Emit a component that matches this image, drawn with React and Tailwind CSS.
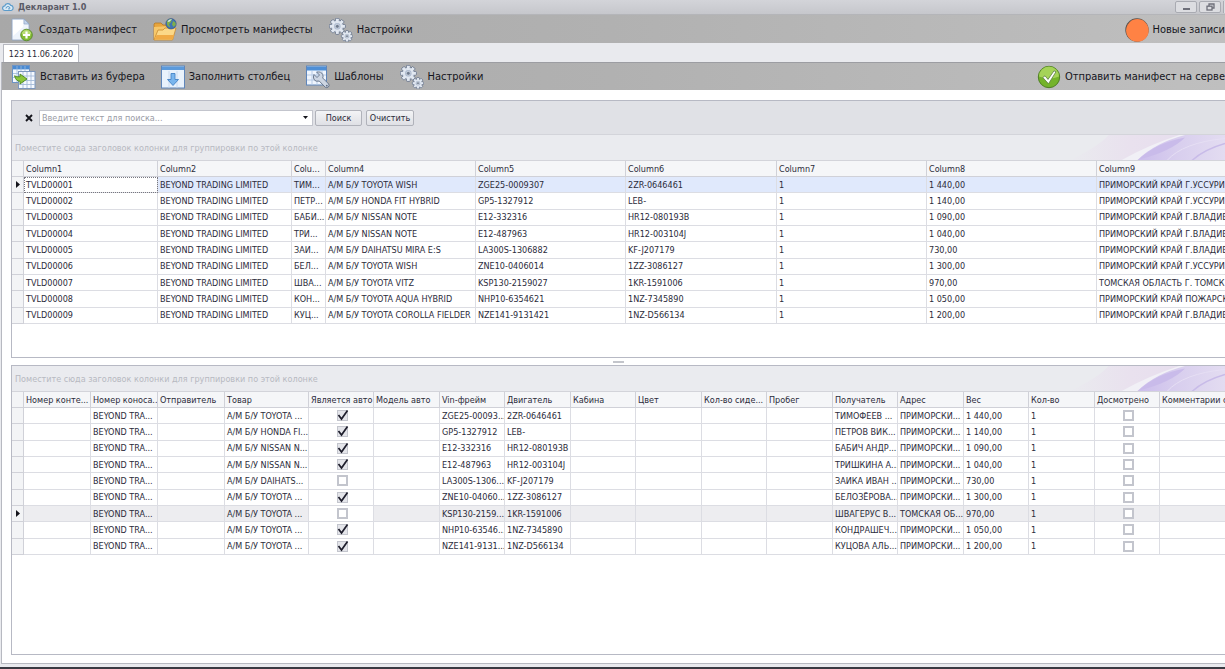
import React from "react";

const GEAR_TEETH = [0, 45, 90, 135, 180, 225, 270, 315];

function Gear({ cx, cy, r }) {
  return (
    <g transform={`translate(${cx} ${cy})`}>
      {GEAR_TEETH.map((a) => (
        <rect key={a} x={-r * 0.23} y={-r} width={r * 0.46} height={r * 0.6} rx={r * 0.1} fill="#dde4ee" stroke="#66738a" strokeWidth="0.9" transform={`rotate(${a})`} />
      ))}
      <circle r={r * 0.76} fill="#d5dde9" stroke="#748197" strokeWidth="0.7" />
      {GEAR_TEETH.map((a) => (
        <rect key={a} x={-r * 0.17} y={-r * 0.92} width={r * 0.34} height={r * 0.5} fill="#e2e8f1" transform={`rotate(${a})`} />
      ))}
      <circle r={r * 0.4} fill="#aebbd0" />
      <circle r={r * 0.24} fill="#6e7a8e" stroke="#f1f4f9" strokeWidth="0.5" />
    </g>
  );
}

function GearsIcon() {
  return (
    <svg className="size-6 shrink-0" viewBox="0 0 24 24" aria-hidden="true">
      <Gear cx={8.3} cy={8.3} r={8} />
      <Gear cx={18} cy={18.2} r={5.6} />
    </svg>
  );
}

function NewDocIcon() {
  return (
    <svg className="size-6 shrink-0" viewBox="0 0 24 24" aria-hidden="true">
      <path d="M1 1h12l5 5v16H1z" fill="#eef4fc" stroke="#8fa5c4" strokeWidth="0.8" />
      <path d="M2 2h10v7l-10 9z" fill="#fff" />
      <path d="M13 1v5h5z" fill="#c4d6ee" stroke="#8fa5c4" strokeWidth="0.7" />
      <circle cx="15.5" cy="17" r="5.8" fill="#84bd34" stroke="#4f8220" strokeWidth="0.8" />
      <path d="M10.6 16a5 5 0 0 1 9.8 0q-5 2-9.8 0z" fill="#b6dc72" />
      <path d="M15.5 13.4v7.2M11.9 17h7.2" stroke="#fff" strokeWidth="2.2" />
    </svg>
  );
}

function FolderIcon() {
  return (
    <svg className="size-6 shrink-0" viewBox="0 0 24 24" aria-hidden="true">
      <path d="M1 22V6l1-1h6l2 2h9v3" fill="#e8a53c" stroke="#b57a26" strokeWidth="0.8" />
      <path d="M1 22V9l16-1v6z" fill="#f6c76a" />
      <path d="M1 22 5 12h5l2-2h11l-3.5 12z" fill="#fbd888" stroke="#c98a2e" strokeWidth="0.8" />
      <path d="M1.6 21.6 3.6 17h17.6l-1.5 4.6z" fill="#f0ab46" />
      <circle cx="18" cy="5.8" r="5.2" fill="#3f73b5" stroke="#35507c" strokeWidth="0.6" />
      <path d="M14 3q3-2.6 5-1.8l-1 3-2 2 1.4 3Q13 8.5 14 3zM20 3l2.4 1.5.4 2.5-2.3 2L19 6.5z" fill="#7fae4c" />
      <path d="M14.5 3.2q2-2.3 4.5-1.9l-3 2.6z" fill="#d4e6f3" />
    </svg>
  );
}

function PasteIcon() {
  return (
    <svg className="size-6 shrink-0" viewBox="0 0 24 24" aria-hidden="true">
      <rect x=".5" y=".5" width="17" height="17" fill="#f3f8fe" stroke="#6d93c4" />
      <rect x="1" y="1" width="16" height="3.4" fill="#4a8bd2" />
      <path d="M1 8.5h16M1 12.5h16M5 1v16M9 1v16M13 1v16" stroke="#9db9dc" strokeWidth=".8" />
      <rect x="6.5" y="6.5" width="16.5" height="17" fill="#f6faff" stroke="#7d97bd" />
      <path d="M7 11h16M7 15.5h16M7 19.5h16M11 7v16M15 7v16M19 7v16" stroke="#a4bad8" strokeWidth=".9" />
      <path d="M2.5 10.8q2 1.400 5.500 1V9l7 5-7 5v-2.800Q4 16.500 2.500 10.800z" fill="#8cc63a" stroke="#4c8720" strokeWidth=".9" />
    </svg>
  );
}

function FillColumnIcon() {
  return (
    <svg className="size-6 shrink-0" viewBox="0 0 24 24" aria-hidden="true">
      <rect x=".5" y="1" width="23" height="22" fill="#e9f2fc" stroke="#5f86bb" />
      <rect x="1" y="1.5" width="22" height="3.500" fill="#5c9adb" />
      <path d="M8 6v17M16 6v17" stroke="#c3d6ee" strokeWidth=".8" />
      <path d="M10 8.5h4v6h3.500L12 20.500l-5.500-6H10z" fill="#7ab6ee" stroke="#4583c6" strokeWidth=".9" />
    </svg>
  );
}

function TemplatesIcon() {
  return (
    <svg className="size-6 shrink-0" viewBox="0 0 24 24" aria-hidden="true">
      <rect x=".5" y="1" width="20" height="19" fill="#eff5fd" stroke="#5f86bb" />
      <rect x="1" y="1.500" width="19" height="4" fill="#4f8fd6" />
      <path d="M1 10h19M1 15h19M6 6v14M11 6v14M16 6v14" stroke="#b1c7e3" strokeWidth=".9" />
      <path d="M8 9.500 11 12.500 13.500 10 10.700 7.200Q15 6 16.700 9.500q.8 1.700 0 3.500l6 6q1 1.800-.4 3t-3 .3l-6-6.200Q9.500 17 8 14.500 6.800 12 8 9.500z" fill="#cdd6e3" stroke="#5f6d83" strokeWidth=".9" />
      <circle cx="20.800" cy="20.700" r=".9" fill="#5f6d83" />
    </svg>
  );
}

function SendIcon() {
  return (
    <svg className="size-6 shrink-0" viewBox="0 0 24 24" aria-hidden="true">
      <circle cx="12" cy="12" r="10.700" fill="#74b32a" stroke="#4f7f24" strokeWidth="1" />
      <path d="M2 11.500a10 10 0 0 1 20 0q-9 4-20 0z" fill="#a5d358" />
      <path d="M5.800 12.500 8 10.800l3 3.600L17 5.800l2 1-7.500 12z" fill="#fff" stroke="#5d7f43" strokeWidth=".8" />
    </svg>
  );
}

function Swirl() {
  return (
    <svg className="h-full w-44 shrink-0" viewBox="0 0 176 26" preserveAspectRatio="xMaxYMid slice" aria-hidden="true">
      <defs>
        <linearGradient id="pinkFade" x1="0" x2="1">
          <stop offset="0" stopColor="#eaebef" />
          <stop offset=".4" stopColor="#e9e1ee" />
          <stop offset="1" stopColor="#e5dcee" />
        </linearGradient>
        <linearGradient id="violetFade" x1="0" x2="1">
          <stop offset="0" stopColor="#cbbdec" />
          <stop offset=".45" stopColor="#d8ceee" />
          <stop offset="1" stopColor="#e3dcf1" />
        </linearGradient>
      </defs>
      <path d="M20 26Q50 12 60 0h116v26z" fill="url(#pinkFade)" />
      <path d="M72 26Q100 10 132 0h18Q110 8 88 26z" fill="#f1f0f6" />
      <path d="M88 26Q106 8 138 0h38v26z" fill="url(#violetFade)" />
      <path d="M90 25q18-17 46-22-14 14-46 22z" fill="#c9bbea" />
      <path d="M143 26q12-11 33-17" fill="none" stroke="#c8bbe8" strokeWidth="1.500" />
      <path d="M118 26q16-18 58-22" fill="none" stroke="#e6dff4" strokeWidth="1" />
    </svg>
  );
}

function ToolButton({ icon, children }) {
  return (
    <button type="button" className="flex shrink-0 items-center gap-1 whitespace-nowrap text-[11px] leading-4 text-[#15151c]">
      {icon}
      {children}
    </button>
  );
}

function GroupPanel() {
  return (
    <div className="flex h-[26px] items-center justify-between border-b border-[#d3d4da] bg-[#eaebef] pl-[3px] text-[#b7b9c1]">
      <span className="pt-px whitespace-nowrap">Поместите сюда заголовок колонки для группировки по этой колонке</span>
      <Swirl />
    </div>
  );
}

const CELL = "overflow-hidden whitespace-nowrap border-r border-b border-[#dcdde3] py-0 pr-0 pl-[2px] last:border-r-0";
const HEAD = "overflow-hidden whitespace-nowrap border-r border-b border-[#d0d1d8] bg-[#f5f6f8] py-0 pr-0 pl-[2px] text-left font-normal last:border-r-0";
const INDICATOR = "border-r border-b border-[#d0d1d8] bg-[#f3f4f6] p-0";

function RowMarker() {
  return (
    <svg className="mx-auto h-[7px] w-1" viewBox="0 0 4 7" aria-label="Текущая строка">
      <path d="M0 0 4 3.500 0 7z" fill="#15151c" />
    </svg>
  );
}

function CheckBox({ checked, label }) {
  return (
    <label className="relative mx-auto block size-[11px]">
      <input
        type="checkbox"
        defaultChecked={checked}
        aria-label={label}
        className="block size-[11px] appearance-none border-2 border-[#c3c5cd] bg-white peer checked:border checked:bg-[#e4e5ea]"
      />
      <svg className="pointer-events-none absolute inset-0 hidden size-[11px] overflow-visible peer-checked:block" viewBox="0 0 11 11" aria-hidden="true">
        <path d="M1.500 5 4.500 9 10.500 .5" fill="none" stroke="#1e1e2c" strokeWidth="1.700" />
      </svg>
    </label>
  );
}

const TOP_COLUMNS = [
  ["Column1", "w-[134px]"],
  ["Column2", "w-[134px]"],
  ["Colu...", "w-[34px]"],
  ["Column4", "w-[150px]"],
  ["Column5", "w-[150px]"],
  ["Column6", "w-[151px]"],
  ["Column7", "w-[150px]"],
  ["Column8", "w-[170px]"],
  ["Column9", ""],
];

const B = "BEYOND TRADING LIMITED";
const TOP_ROWS = [
  ["TVLD00001", B, "ТИМ...", "А/М Б/У TOYOTA WISH", "ZGE25-0009307", "2ZR-0646461", "1", "1 440,00", "ПРИМОРСКИЙ КРАЙ Г.УССУРИ."],
  ["TVLD00002", B, "ПЕТР...", "А/М Б/У HONDA FIT HYBRID", "GP5-1327912", "LEB-", "1", "1 140,00", "ПРИМОРСКИЙ КРАЙ Г.УССУРИ."],
  ["TVLD00003", B, "БАБИ...", "А/М Б/У NISSAN NOTE", "E12-332316", "HR12-080193B", "1", "1 090,00", "ПРИМОРСКИЙ КРАЙ Г.ВЛАДИВ."],
  ["TVLD00004", B, "ТРИ...", "А/М Б/У NISSAN NOTE", "E12-487963", "HR12-003104J", "1", "1 040,00", "ПРИМОРСКИЙ КРАЙ Г.ВЛАДИВ."],
  ["TVLD00005", B, "ЗАИ...", "А/М Б/У DAIHATSU MIRA E:S", "LA300S-1306882", "KF-J207179", "1", "730,00", "ПРИМОРСКИЙ КРАЙ Г.ВЛАДИВ."],
  ["TVLD00006", B, "БЕЛ...", "А/М Б/У TOYOTA WISH", "ZNE10-0406014", "1ZZ-3086127", "1", "1 300,00", "ПРИМОРСКИЙ КРАЙ Г.УССУРИ."],
  ["TVLD00007", B, "ШВА...", "А/М Б/У TOYOTA VITZ", "KSP130-2159027", "1KR-1591006", "1", "970,00", "ТОМСКАЯ ОБЛАСТЬ Г. ТОМСК ."],
  ["TVLD00008", B, "КОН...", "А/М Б/У TOYOTA AQUA HYBRID", "NHP10-6354621", "1NZ-7345890", "1", "1 050,00", "ПРИМОРСКИЙ КРАЙ ПОЖАРСК."],
  ["TVLD00009", B, "КУЦ...", "А/М Б/У TOYOTA COROLLA FIELDER", "NZE141-9131421", "1NZ-D566134", "1", "1 200,00", "ПРИМОРСКИЙ КРАЙ Г.ВЛАДИВ."],
];

const BOTTOM_COLUMNS = [
  ["Номер конте...", "w-[67px]"],
  ["Номер коноса...", "w-[67px]"],
  ["Отправитель", "w-[67px]"],
  ["Товар", "w-[84px]"],
  ["Является авто", "w-[65px]"],
  ["Модель авто", "w-[66px]"],
  ["Vin-фрейм", "w-[65px]"],
  ["Двигатель", "w-[66px]"],
  ["Кабина", "w-[65px]"],
  ["Цвет", "w-[66px]"],
  ["Кол-во сиде...", "w-[65px]"],
  ["Пробег", "w-[66px]"],
  ["Получатель", "w-[65px]"],
  ["Адрес", "w-[66px]"],
  ["Вес", "w-[65px]"],
  ["Кол-во", "w-[66px]"],
  ["Досмотрено", "w-[65px]"],
  ["Комментарии с.", ""],
];

const P = "ПРИМОРСКИ...";
const BOTTOM_ROWS = [
  ["А/М Б/У TOYOTA ...", true, "ZGE25-00093...", "2ZR-0646461", "ТИМОФЕЕВ ...", P, "1 440,00"],
  ["А/М Б/У HONDA FI...", true, "GP5-1327912", "LEB-", "ПЕТРОВ ВИК...", P, "1 140,00"],
  ["А/М Б/У NISSAN N...", true, "E12-332316", "HR12-080193B", "БАБИЧ АНДР...", P, "1 090,00"],
  ["А/М Б/У NISSAN N...", true, "E12-487963", "HR12-003104J", "ТРИШКИНА А...", P, "1 040,00"],
  ["А/М Б/У DAIHATS...", false, "LA300S-1306...", "KF-J207179", "ЗАИКА ИВАН ...", P, "730,00"],
  ["А/М Б/У TOYOTA ...", true, "ZNE10-04060...", "1ZZ-3086127", "БЕЛОЗЁРОВА...", P, "1 300,00"],
  ["А/М Б/У TOYOTA ...", false, "KSP130-2159...", "1KR-1591006", "ШВАГЕРУС В...", "ТОМСКАЯ ОБ...", "970,00"],
  ["А/М Б/У TOYOTA ...", true, "NHP10-63546...", "1NZ-7345890", "КОНДРАШЕЧ...", P, "1 050,00"],
  ["А/М Б/У TOYOTA ...", true, "NZE141-9131...", "1NZ-D566134", "КУЦОВА АЛЬ...", P, "1 200,00"],
];

function Grid({ columns, children }) {
  return (
    <table className="h-[163px] w-full table-fixed border-separate border-spacing-0">
      <colgroup>
        <col className="w-3" />
        {columns.map(([name, width]) => (
          <col key={name} className={width} />
        ))}
      </colgroup>
      <thead>
        <tr className="h-4">
          <th className={INDICATOR} />
          {columns.map(([name]) => (
            <th key={name} scope="col" className={HEAD}>{name}</th>
          ))}
        </tr>
      </thead>
      <tbody>{children}</tbody>
    </table>
  );
}

function TopRow({ row, current }) {
  return (
    <tr className={current ? "bg-[#e0e9fc]" : "bg-white"}>
      <td className={INDICATOR}>{current && <RowMarker />}</td>
      {row.map((text, i) => (
        <td key={i} className={current && i === 0 ? CELL + " bg-white outline-1 -outline-offset-1 outline-dotted outline-[#77777f]" : CELL}>
          {text}
        </td>
      ))}
    </tr>
  );
}

function BottomRow({ row, current }) {
  const [goods, isCar, vin, engine, recipient, address, weight] = row;
  return (
    <tr className={current ? "bg-[#ededf0]" : "bg-white"}>
      <td className={INDICATOR}>{current && <RowMarker />}</td>
      <td className={CELL} />
      <td className={CELL}>BEYOND TRA...</td>
      <td className={CELL} />
      <td className={CELL}>{goods}</td>
      <td className={CELL + " bg-white"}><CheckBox checked={isCar} label="Является авто" /></td>
      <td className={CELL} />
      <td className={CELL}>{vin}</td>
      <td className={CELL}>{engine}</td>
      <td className={CELL} />
      <td className={CELL} />
      <td className={CELL} />
      <td className={CELL} />
      <td className={CELL}>{recipient}</td>
      <td className={CELL}>{address}</td>
      <td className={CELL}>{weight}</td>
      <td className={CELL}>1</td>
      <td className={CELL}><CheckBox checked={false} label="Досмотрено" /></td>
      <td className={CELL} />
    </tr>
  );
}

export default function App() {
  return (
    <div className="flex min-h-screen flex-col overflow-hidden border-b-2 border-[#3a3a42] bg-[#e9eaee] font-['DejaVu_Sans_Condensed','DejaVu_Sans',sans-serif] text-[9px] leading-3 text-[#2b2b3a]">
      <header className="flex h-[14px] items-center justify-between bg-linear-to-b from-[#d3d4d9] to-[#c6c7cc] pl-[2px]">
        <div className="flex items-center gap-1">
          <svg className="h-[10px] w-3" viewBox="0 0 12 10" aria-hidden="true">
            <path d="M3 8.500a2.300 2.300 0 0 1-.2-4.600 3.200 3.200 0 0 1 6-.5 2.600 2.600 0 0 1 .4 5.100z" fill="#dcebf6" stroke="#5b9bca" strokeWidth="1.200" />
            <path d="M4 6.500q0-2 2-2t2 2q-1 1.500-2 0" fill="none" stroke="#5b9bca" strokeWidth="1" />
          </svg>
          <h1 className="text-[9px] leading-3 font-bold text-[#5a5a66]">Декларант 1.0</h1>
        </div>
        <div className="flex gap-[2px]">
          <button type="button" aria-label="Свернуть" className="flex h-3 w-[22px] items-end justify-center rounded-xs border border-[#a9abb2] bg-[#dcdde1] pb-[2px]">
            <span className="h-[2px] w-[7px] bg-[#6d6f79]" />
          </button>
          <button type="button" aria-label="Восстановить" className="flex h-3 w-[22px] items-center justify-center rounded-xs border border-[#a9abb2] bg-[#dcdde1]">
            <svg className="h-2 w-[9px]" viewBox="0 0 9 8" aria-hidden="true">
              <path d="M3 3V1h5v4H6" fill="none" stroke="#6d6f79" strokeWidth="1.300" />
              <rect x="1" y="3.200" width="5" height="3.800" fill="#dcdde1" stroke="#6d6f79" strokeWidth="1.300" />
            </svg>
          </button>
          <span className="h-3 w-[2px] border-l border-[#a9abb2] bg-[#dcdde1]" />
        </div>
      </header>

      <nav className="flex h-[29px] items-center gap-4 border-t border-[#b4b5b9] bg-linear-to-r from-[#a8a8a8] via-[#b1b1b1] to-[#bfbfbf] pt-px pl-[11px]">
        <ToolButton icon={<NewDocIcon />}>Создать манифест</ToolButton>
        <ToolButton icon={<FolderIcon />}>Просмотреть манифесты</ToolButton>
        <ToolButton icon={<GearsIcon />}>Настройки</ToolButton>
        <div className="ml-auto">
          <ToolButton
            icon={
              <svg className="size-6 shrink-0" viewBox="0 0 24 24" aria-hidden="true">
                <circle cx="12" cy="12" r="11.700" fill="#55504c" />
                <circle cx="12.400" cy="12.400" r="11.300" fill="#ff8244" />
              </svg>
            }
          >
            Новые записи
          </ToolButton>
        </div>
      </nav>

      <div className="flex h-[19px] items-end pt-px pl-[3px]" role="tablist">
        <button type="button" role="tab" aria-selected="true" className="h-[18px] w-[76px] border border-b-0 border-[#b7b9c1] bg-white whitespace-nowrap">
          123 11.06.2020
        </button>
      </div>

      <main className="mb-[3px] ml-px flex flex-1 flex-col border-b border-l border-[#b7b9c1] bg-white">
        <div className="flex h-7 shrink-0 items-center gap-4 border-t border-[#9c9da2] bg-linear-to-r from-[#a8a8a8] via-[#b1b1b1] to-[#bfbfbf] pl-[10px]">
          <ToolButton icon={<PasteIcon />}>Вставить из буфера</ToolButton>
          <ToolButton icon={<FillColumnIcon />}>Заполнить столбец</ToolButton>
          <ToolButton icon={<TemplatesIcon />}>Шаблоны</ToolButton>
          <ToolButton icon={<GearsIcon />}>Настройки</ToolButton>
          <div className="ml-auto">
            <ToolButton icon={<SendIcon />}>Отправить манифест на серве</ToolButton>
          </div>
        </div>

        <div className="flex flex-1 flex-col pt-[10px] pb-2 pl-[9px]">
          <section className="border border-r-0 border-[#b7b9c4] pb-[33px]">
            <form className="flex h-[34px] items-center border-b border-[#d3d4da] bg-[#e0e1e6] pl-[13px]" onSubmit={(e) => e.preventDefault()}>
              <button type="button" aria-label="Закрыть поиск" className="mr-[6px]">
                <svg className="block size-2" viewBox="0 0 8 8" aria-hidden="true">
                  <path d="M1 1l6 6M7 1 1 7" stroke="#15151c" strokeWidth="1.900" />
                </svg>
              </button>
              <div className="flex h-4 w-[274px] items-center border border-[#c3c5cd] bg-white">
                <input type="text" aria-label="Поиск" placeholder="Введите текст для поиска..." className="h-full min-w-0 flex-1 px-[2px] outline-none placeholder:text-[#9a9ca6]" />
                <button type="button" aria-label="Показать историю" className="px-1">
                  <svg className="block h-[3px] w-[5px]" viewBox="0 0 5 3" aria-hidden="true">
                    <path d="M0 0h5L2.500 3z" fill="#15151c" />
                  </svg>
                </button>
              </div>
              <button type="submit" className="ml-[2px] h-4 w-[47px] rounded-xs border border-[#b0b2ba] bg-linear-to-b from-[#f3f4f6] to-[#dfe0e5]">Поиск</button>
              <button type="reset" className="ml-1 h-4 w-12 rounded-xs border border-[#b0b2ba] bg-linear-to-b from-[#f3f4f6] to-[#dfe0e5]">Очистить</button>
            </form>
            <GroupPanel />
            <Grid columns={TOP_COLUMNS}>
              {TOP_ROWS.map((row, i) => (
                <TopRow key={row[0]} row={row} current={i === 0} />
              ))}
            </Grid>
          </section>

          <div className="flex h-[7px] items-center justify-center" role="separator">
            <span className="h-[2px] w-[11px] bg-[#c3c5cb]" />
          </div>

          <section className="flex-1 border border-r-0 border-[#b7b9c4]">
            <GroupPanel />
            <Grid columns={BOTTOM_COLUMNS}>
              {BOTTOM_ROWS.map((row, i) => (
                <BottomRow key={i} row={row} current={i === 6} />
              ))}
            </Grid>
          </section>
        </div>
      </main>
    </div>
  );
}
